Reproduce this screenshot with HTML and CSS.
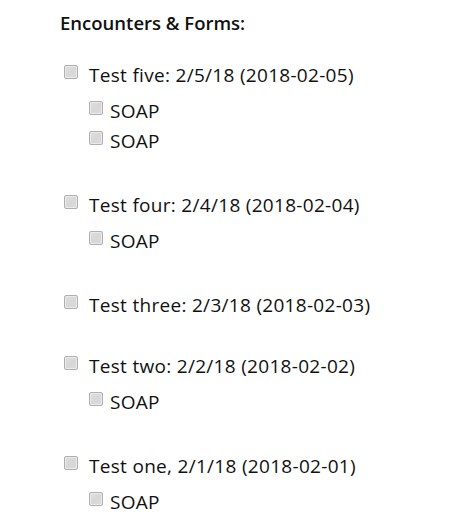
FILE: index.html
```html
<!DOCTYPE html>
<html>
<head>
<meta charset="utf-8">
<link rel="stylesheet" href="styles.css">
</head>
<body>
<h2 class="title">Encounters &amp; Forms:</h2>
<ul class="encounters">
  <li class="encounter">
    <label class="row enc-row"><span class="cb"></span><span class="label">Test five: 2/5/18 (2018-02-05)</span></label>
    <ul class="forms">
      <li><label class="row form-row"><span class="cb"></span><span class="label">SOAP</span></label></li>
      <li><label class="row form-row"><span class="cb"></span><span class="label">SOAP</span></label></li>
    </ul>
  </li>
  <li class="encounter">
    <label class="row enc-row"><span class="cb"></span><span class="label">Test four: 2/4/18 (2018-02-04)</span></label>
    <ul class="forms">
      <li><label class="row form-row"><span class="cb"></span><span class="label">SOAP</span></label></li>
    </ul>
  </li>
  <li class="encounter">
    <label class="row enc-row"><span class="cb"></span><span class="label">Test three: 2/3/18 (2018-02-03)</span></label>
  </li>
  <li class="encounter">
    <label class="row enc-row"><span class="cb"></span><span class="label">Test two: 2/2/18 (2018-02-02)</span></label>
    <ul class="forms">
      <li><label class="row form-row"><span class="cb"></span><span class="label">SOAP</span></label></li>
    </ul>
  </li>
  <li class="encounter">
    <label class="row enc-row"><span class="cb"></span><span class="label">Test one, 2/1/18 (2018-02-01)</span></label>
    <ul class="forms">
      <li><label class="row form-row"><span class="cb"></span><span class="label">SOAP</span></label></li>
    </ul>
  </li>
</ul>
</body>
</html>
```
FILE: styles.css
```css
html, body {
  margin: 0;
  padding: 0;
  background: #ffffff;
}
body {
  padding: 11px 0 0 60px;
  font-family: "Open Sans", "Noto Sans", sans-serif;
  color: #111111;
}
.title {
  margin: 0 0 28px 0;
  font-size: 18.5px;
  line-height: 24px;
  font-weight: 600;
  color: #111111;
}
.encounters {
  list-style: none;
  margin: 0;
  padding: 0 0 0 4px;
}
.encounter {
  margin: 0 0 37px 0;
}
.encounter:last-child {
  margin-bottom: 0;
}
.forms {
  list-style: none;
  margin: 9px 0 0 0;
  padding: 0 0 0 25px;
}
.row {
  display: flex;
  align-items: center;
  font-size: 19px;
  letter-spacing: 0.3px;
}
.enc-row {
  line-height: 24px;
}
.form-row {
  line-height: 30px;
}
.cb {
  flex: none;
  width: 12px;
  height: 12px;
  border: 1px solid #b0aeb0;
  border-radius: 2px;
  background: linear-gradient(135deg, #e2dee2 0%, #d6d8d6 50%, #dedade 100%);
  box-shadow: inset 0 0 0 1px #eaeaea;
  transform: translateY(-3px);
}
.enc-row .cb {
  margin-right: 11px;
}
.form-row .cb {
  margin-right: 7px;
}
```
